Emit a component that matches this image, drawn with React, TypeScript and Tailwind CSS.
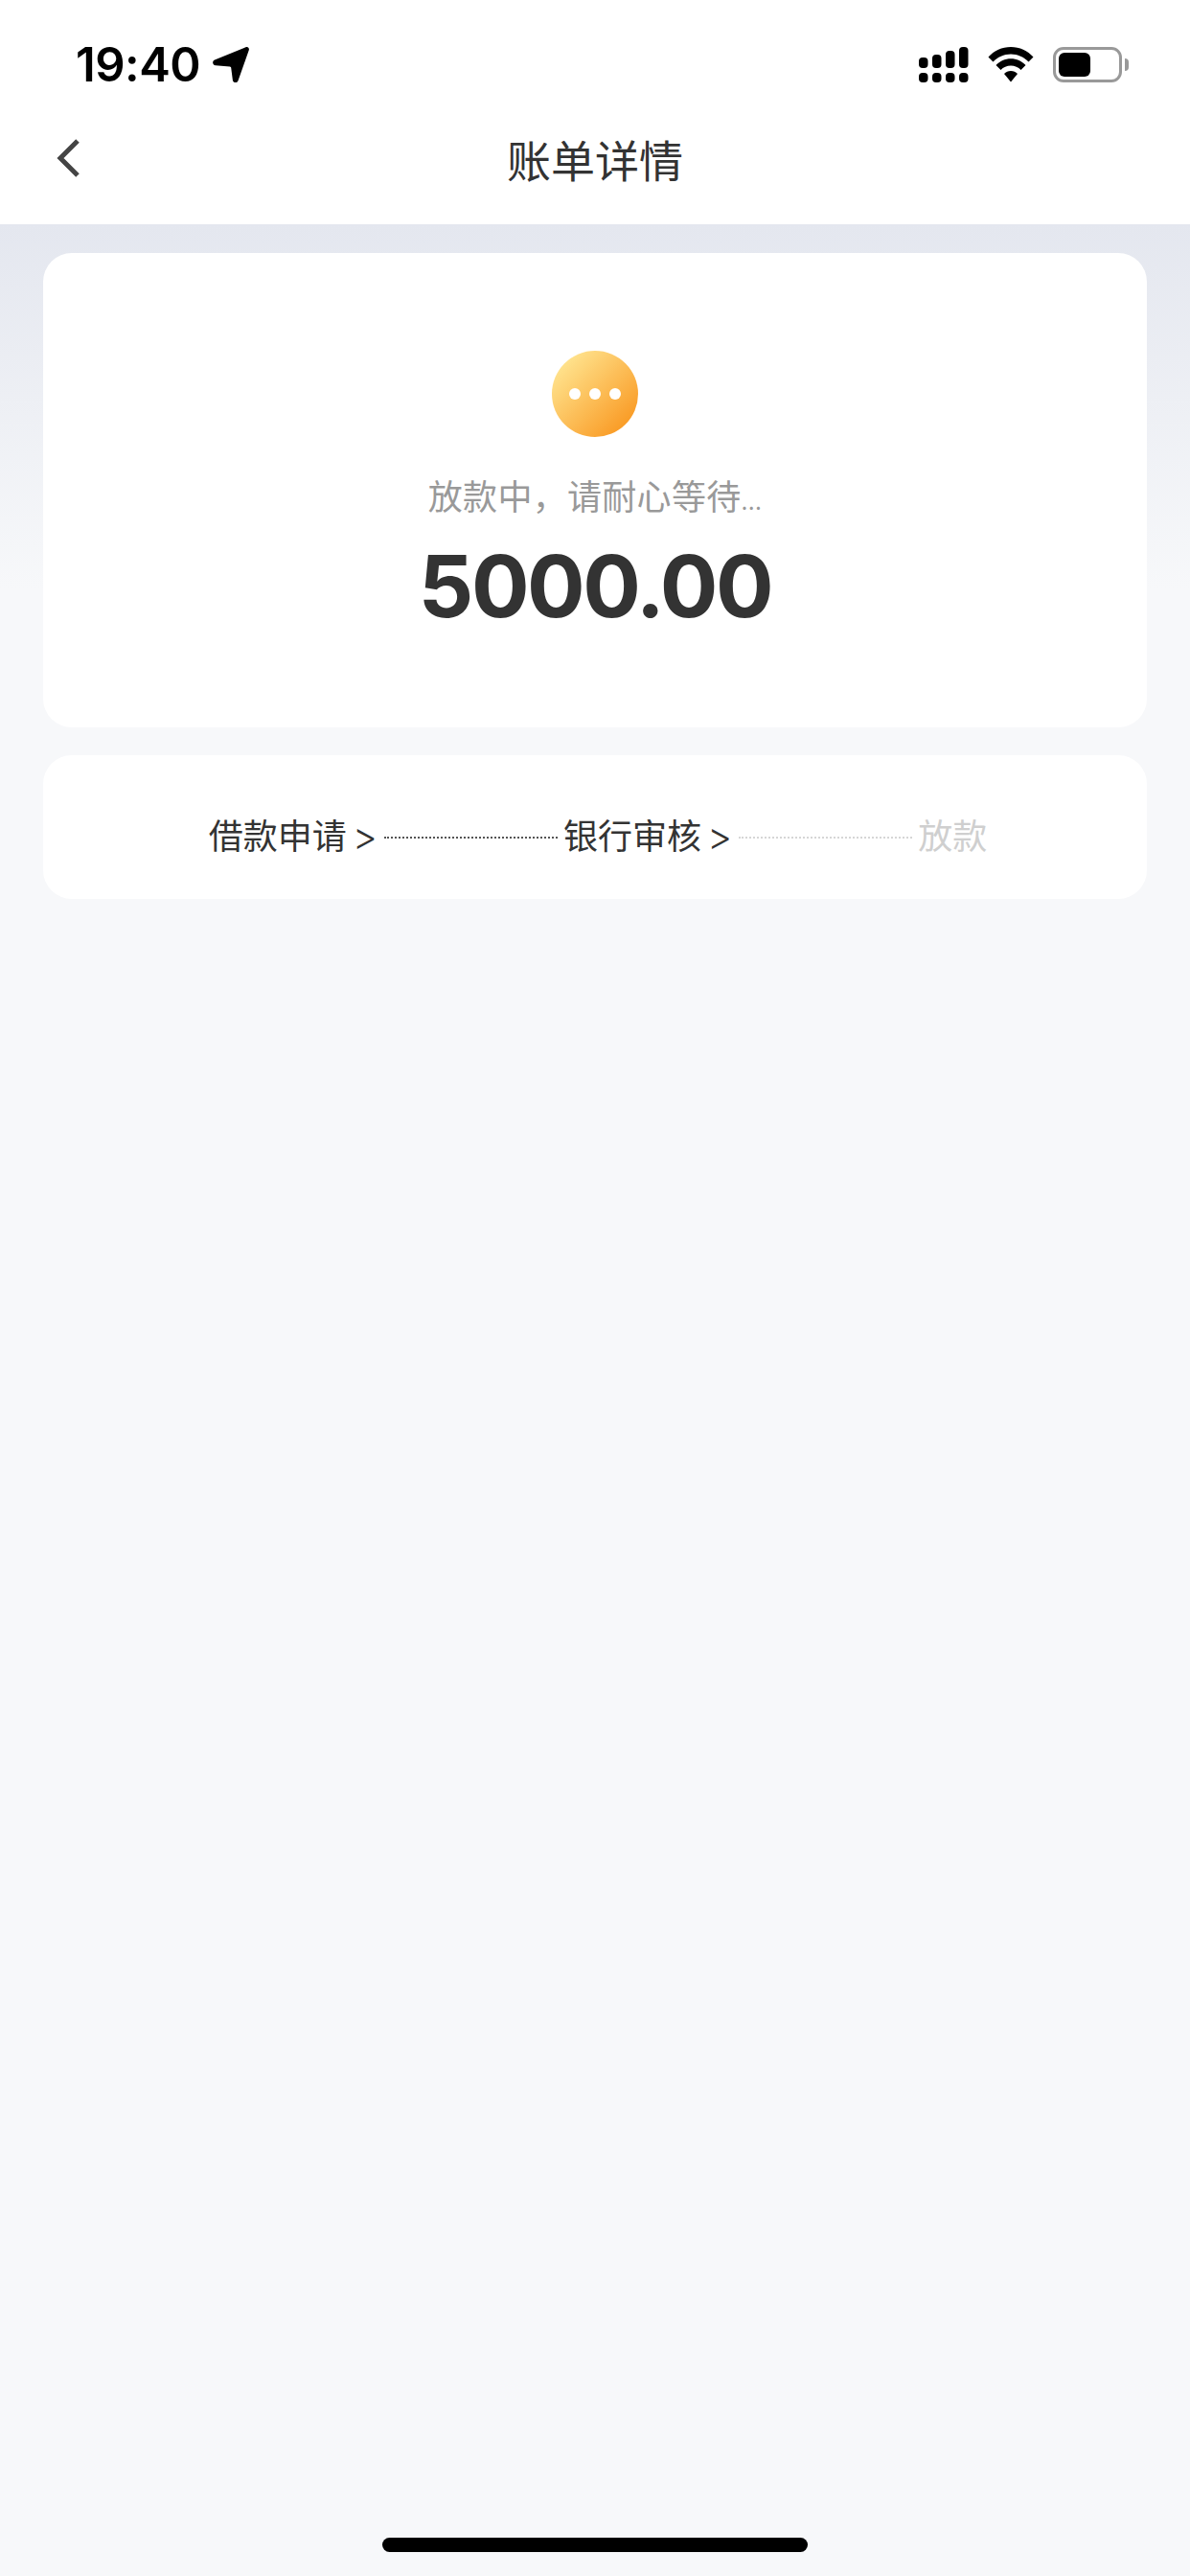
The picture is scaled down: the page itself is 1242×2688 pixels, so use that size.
import React from 'react';

const SignalIcon = () => (
  <svg width="52" height="38" viewBox="0 0 52 38" fill="#000">
    {/* top row grows left to right, bottom row is plain dots */}
    <rect x="0" y="11" width="9.500" height="11" rx="4" />
    <rect x="14" y="8" width="9.500" height="14" rx="4" />
    <rect x="28" y="4" width="9.500" height="18" rx="4" />
    <rect x="42" y="0" width="9.500" height="22" rx="4" />
    <rect x="0" y="27" width="9.500" height="10" rx="4" />
    <rect x="14" y="27" width="9.500" height="10" rx="4" />
    <rect x="28" y="27" width="9.500" height="10" rx="4" />
    <rect x="42" y="27" width="9.500" height="10" rx="4" />
  </svg>
);

const WifiIcon = () => (
  <svg width="48" height="37" viewBox="0 0 48 37" fill="#000">
    <path d="M0.5 10.500C6.500 4 14.800 0 24 0s17.500 4 23.500 10.500L42.500 15.500C37.800 10.500 31.300 7.500 24 7.500S10.200 10.500 5.500 15.500Z" />
    <path d="M8.500 19C12.500 14.800 18 12.300 24 12.300S35.500 14.800 39.500 19L34.500 24C31.800 21.200 28.100 19.600 24 19.600S16.200 21.200 13.500 24Z" />
    <path d="M17 28C18.800 26.200 21.300 25.100 24 25.100S29.200 26.200 31 28L24 36.500Z" />
  </svg>
);

const LocationIcon = () => (
  <svg width="38" height="38" viewBox="0 0 38 38" fill="#000">
    <path d="M34.500 0.300C36.800 -0.500 38.500 1.300 37.700 3.600L26.500 35.200C25.500 38 21.300 37.700 20.900 34.700L19.200 21.800C19.100 21 18.700 20.600 17.900 20.500L3 19.200C-0.200 18.900 -1 14.800 2 13.500Z" />
  </svg>
);

const BatteryIcon = () => (
  <div className="flex items-center gap-[3px]">
    <div className="w-[72px] h-[37px] rounded-[11px] border-[3px] border-[#999999] p-[3px]">
      <div className="w-[33px] h-full rounded-[6px] bg-black" />
    </div>
    <div className="w-[4px] h-[13px] rounded-r-full bg-[#999999]" />
  </div>
);

const StatusBar = () => (
  <div className="flex items-center justify-between h-[37px] mt-[49px] pl-[79px] pr-[64px]">
    <div className="flex items-center gap-[13px]">
      <span className="text-[49px] leading-[37px] font-semibold text-black tracking-[-0.5px]">19:40</span>
      <LocationIcon />
    </div>
    <div className="flex items-center gap-[20px]">
      <SignalIcon />
      <WifiIcon />
      <BatteryIcon />
    </div>
  </div>
);

const Header = () => (
  <div className="relative flex items-center justify-center h-[148px] pt-[16px] bg-white">
    <svg className="absolute left-[57px] top-[58px]" width="28" height="42" viewBox="0 0 28 42" fill="none">
      <path d="M24 3L6 21L24 39" stroke="#444444" strokeWidth="5" />
    </svg>
    <span className="text-[46px] leading-[62px] text-[#333333]">账单详情</span>
  </div>
);

const DottedLine = ({ light }: { light?: boolean }) => (
  <div className={`w-[181px] mt-[2px] border-t-[2px] border-dotted ${light ? 'border-[#d6d6d6]' : 'border-[#555555]'}`} />
);

const Arrow = () => <span className="ml-[6px] mr-[7px] text-[40px] font-light">&gt;</span>;

const Steps = () => (
  <div className="flex items-center justify-center h-[150px] pt-[20px] pl-[6px] rounded-[30px] bg-white text-[36px] leading-[50px] text-[#333333]">
    <span>借款申请</span>
    <Arrow />
    <DottedLine />
    <span className="ml-[6px]">银行审核</span>
    <Arrow />
    <DottedLine light />
    <span className="ml-[6px] text-[#cfcfcf]">放款</span>
  </div>
);

export default function App() {
  return (
    <div
      lang="zh-CN"
      className="flex flex-col w-[1242px] h-[2688px] bg-white font-['Inter','Noto_Sans_CJK_SC',sans-serif]"
    >
      <StatusBar />
      <Header />
      <main className="flex flex-col flex-1 px-[45px] pt-[30px] pb-[25px] bg-[linear-gradient(180deg,#e4e7ef_0px,#f7f8fa_380px)]">
        <div className="flex flex-col items-center h-[495px] pt-[102px] rounded-[30px] bg-white">
          <div className="flex items-center justify-center gap-[9px] w-[90px] h-[90px] rounded-full bg-[linear-gradient(135deg,#ffe48f_12%,#f9961e_92%)]">
            <span className="w-[12px] h-[12px] rounded-full bg-white" />
            <span className="w-[12px] h-[12px] rounded-full bg-white" />
            <span className="w-[12px] h-[12px] rounded-full bg-white" />
          </div>
          <p className="mt-[38px] text-[36px] leading-[50px] text-[#999999] tracking-[0.3px]">
            放款中，请耐心等待<span className="text-[24px]">...</span>
          </p>
          <p className="mt-[8px] text-[90px] leading-[110px] font-bold text-[#333333] tracking-[-2.5px]">5000.00</p>
        </div>
        <div className="mt-[29px]">
          <Steps />
        </div>
        <div className="mt-auto self-center w-[444px] h-[15px] rounded-full bg-black" />
      </main>
    </div>
  );
}
